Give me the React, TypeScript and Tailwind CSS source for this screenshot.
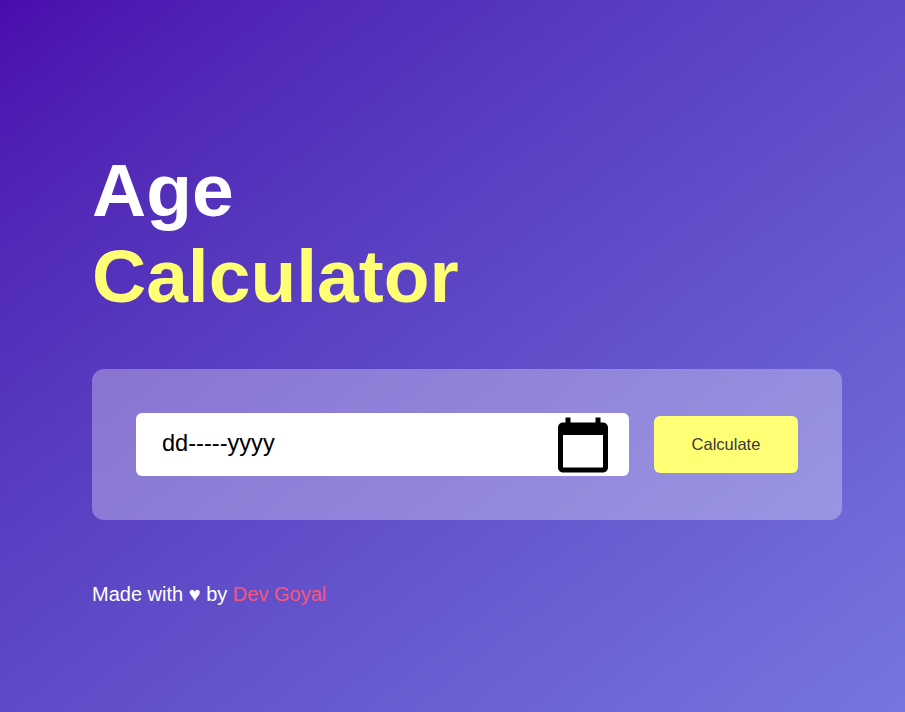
import React from 'react';

const CalendarIcon = () => (
  <svg viewBox="0 0 24 24" className="h-[60px] w-[60px] fill-black">
    <path d="M20 3h-1V1h-2v2H7V1H5v2H4c-1.1 0-2 .9-2 2v16c0 1.1.9 2 2 2h16c1.1 0 2-.9 2-2V5c0-1.1-.9-2-2-2zm0 18H4V8h16v13z" />
  </svg>
);

const App = () => {
  return (
    <div className="h-[712px] overflow-hidden bg-gradient-to-br from-[#4a0aae] to-[#7676e0] pl-[92px] pt-[147px] font-['Liberation_Sans',Arial,sans-serif]">
      <h1 className="text-[75px] font-bold leading-[86px] text-white">
        Age
        <br />
        <span className="text-[#ffff76]">Calculator</span>
      </h1>

      <div className="mt-[50px] flex h-[151px] w-[750px] items-center rounded-xl bg-white/30 px-[44px]">
        <div className="flex h-[63px] w-[493px] items-center justify-between rounded-md bg-white pl-[26px] pr-[16px]">
          <span className="-mt-[2px] text-[23.6px] text-black">dd-----yyyy</span>
          <CalendarIcon />
        </div>
        <button className="ml-[25px] h-[57px] w-[144px] rounded-md bg-[#ffff76] text-[16.5px] text-[#3a3a3a]">
          Calculate
        </button>
      </div>

      <p className="mt-[62px] text-xl leading-[24px] text-white">
        Made with ♥ by <a className="text-[#f7567c]">Dev Goyal</a>
      </p>
    </div>
  );
};

export default App;
